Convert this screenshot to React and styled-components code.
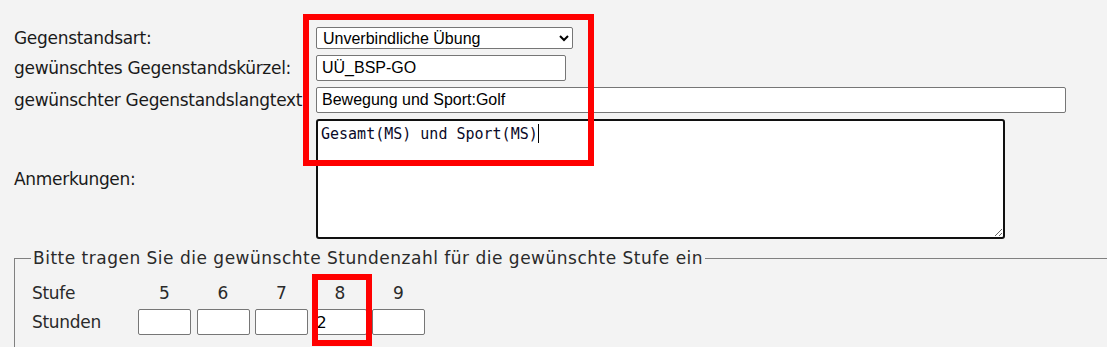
import React from "react";
import styled, { createGlobalStyle } from "styled-components";

const GlobalStyle = createGlobalStyle`
  html, body {
    margin: 0;
    padding: 0;
    background: #f3f3f3;
    overflow: hidden;
  }
  body {
    font-family: "DejaVu Sans", "Liberation Sans", sans-serif;
    color: #1a1a1a;
  }
`;

const Page = styled.div`
  position: relative;
  padding: 27px 0 0 14px;
  width: 1100px;
  height: 320px;
  overflow: hidden;
`;

/* Obere Formularzeilen: Beschriftung links, Eingabe rechts */
const FormGrid = styled.div`
  display: grid;
  grid-template-columns: 296px auto;
  column-gap: 6px;
  row-gap: 6px;
  align-items: center;
  justify-items: start;
`;

const Label = styled.label`
  font-size: 17px;
  line-height: 19px;
  letter-spacing: -0.3px;
  white-space: nowrap;
`;

const Select = styled.select`
  width: 257px;
  height: 22px;
  box-sizing: border-box;
  border: 1px solid #767676;
  border-radius: 2px;
  background: #fff;
  font-family: "Liberation Sans", Arial, sans-serif;
  font-size: 16px;
  color: #000;
  padding: 0 2px;
  margin: 0;
`;

const TextInput = styled.input`
  width: ${(p) => p.$w}px;
  height: 26px;
  box-sizing: border-box;
  border: 1px solid #767676;
  border-radius: 2px;
  background: #fff;
  font-family: "Liberation Sans", Arial, sans-serif;
  font-size: 16px;
  color: #000;
  padding: 1px 5px;
  margin: 0;
`;

const AreaWrap = styled.div`
  position: relative;
  display: flex;
`;

const TextArea = styled.textarea`
  width: 689px;
  height: 120px;
  box-sizing: border-box;
  border: 2px solid #101010;
  border-radius: 3px;
  background: #fff;
  font-family: "DejaVu Sans Mono", "Liberation Mono", monospace;
  font-size: 15px;
  line-height: 20px;
  color: #0a0a28;
  padding: 3px 3px;
  margin: 0;
  outline: none;
`;

const Caret = styled.span`
  position: absolute;
  left: 222px;
  top: 5px;
  width: 1px;
  height: 19px;
  background: #000;
`;

const Fieldset = styled.fieldset`
  margin: 10px 0 0 0;
  width: 1110px;
  box-sizing: border-box;
  border: 1px solid #808080;
  padding: 15px 0 30px 16px;
  min-width: 0;
`;

const Legend = styled.legend`
  padding: 0 2px;
  font-size: 17px;
  line-height: 19px;
  letter-spacing: 0.5px;
  color: #2a2a2a;
`;

/* Tabelle Stufe / Stunden */
const HoursGrid = styled.div`
  display: grid;
  grid-template-columns: 101.5px repeat(5, 53px);
  column-gap: 5.5px;
  row-gap: 6px;
  align-items: center;
`;

const RowLabel = styled.span`
  font-size: 17px;
  line-height: 20px;
  letter-spacing: -0.3px;
  color: #2a2a2a;
  padding-left: 1px;
`;

const Level = styled.span`
  font-size: 17px;
  line-height: 20px;
  color: #2a2a2a;
  text-align: center;
`;

const HourInput = styled.input`
  width: 53px;
  height: 26px;
  box-sizing: border-box;
  border: 1px solid #767676;
  border-radius: 2px;
  background: #fff;
  font-family: "DejaVu Sans", sans-serif;
  font-size: 16px;
  color: #000;
  padding: 1px 2px;
  margin: 0;
`;

/* rote Markierungen aus dem Screenshot */
const Marker = styled.div`
  position: absolute;
  left: ${(p) => p.$x}px;
  top: ${(p) => p.$y}px;
  width: ${(p) => p.$w}px;
  height: ${(p) => p.$h}px;
  box-sizing: border-box;
  border: 6px solid #ff0000;
  pointer-events: none;
`;

const levels = ["5", "6", "7", "8", "9"];
const hours = { 8: "2" };

export default function App() {
  return (
    <>
      <GlobalStyle />
      <Page>
        <FormGrid>
          <Label>Gegenstandsart:</Label>
          <Select defaultValue="ue">
            <option value="ue">Unverbindliche Übung</option>
            <option value="pf">Pflichtgegenstand</option>
          </Select>

          <Label>gewünschtes Gegenstandskürzel:</Label>
          <TextInput $w={250} defaultValue="UÜ_BSP-GO" />

          <Label>gewünschter Gegenstandslangtext</Label>
          <TextInput $w={750} defaultValue="Bewegung und Sport:Golf" />

          <Label>Anmerkungen:</Label>
          <AreaWrap>
            <TextArea defaultValue="Gesamt(MS) und Sport(MS)" />
            <Caret />
          </AreaWrap>
        </FormGrid>

        <Fieldset>
          <Legend>Bitte tragen Sie die gewünschte Stundenzahl für die gewünschte Stufe ein</Legend>
          <HoursGrid>
            <RowLabel>Stufe</RowLabel>
            {levels.map((l) => (
              <Level key={l}>{l}</Level>
            ))}
            <RowLabel>Stunden</RowLabel>
            {levels.map((l) => (
              <HourInput key={l} defaultValue={hours[l] || ""} />
            ))}
          </HoursGrid>
        </Fieldset>

        <Marker $x={303} $y={14} $w={291} $h={152} />
        <Marker $x={312} $y={274} $w={60} $h={72} />
      </Page>
    </>
  );
}
